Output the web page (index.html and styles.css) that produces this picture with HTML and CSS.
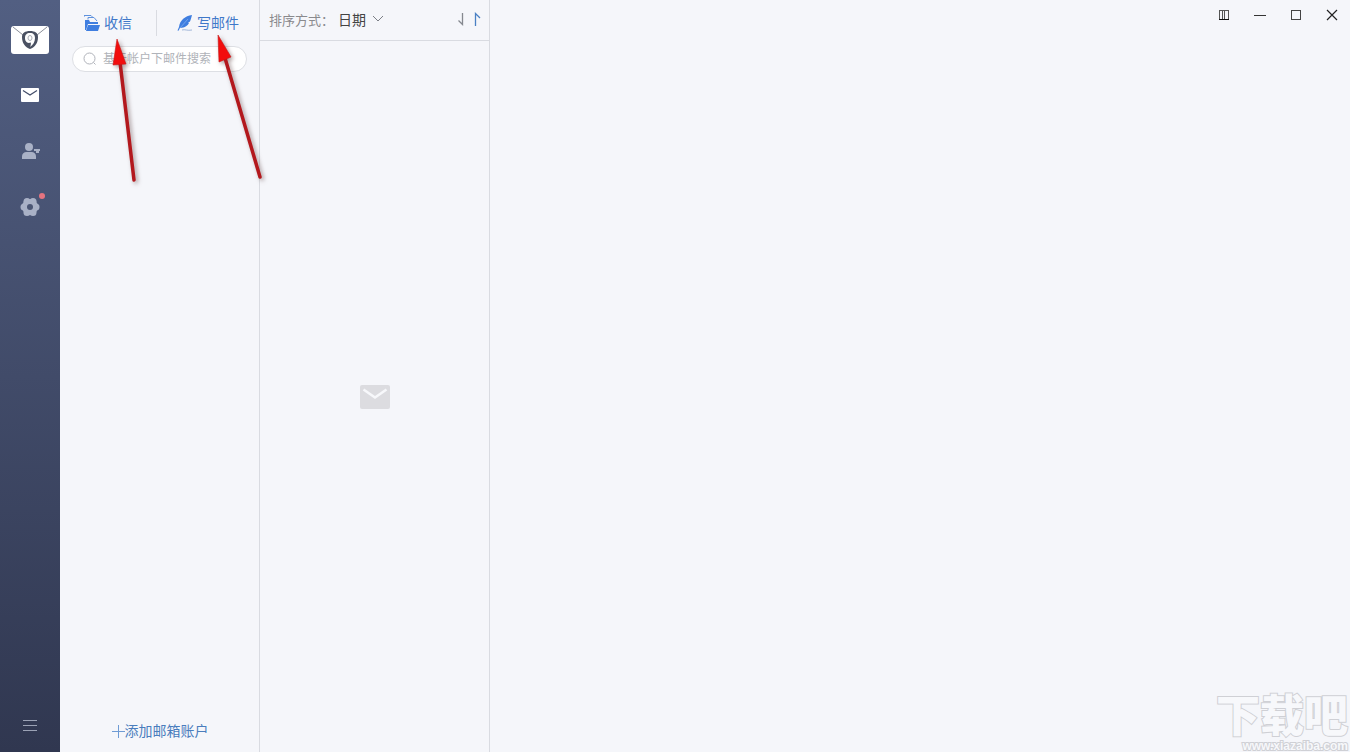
FILE: index.html
```
<!DOCTYPE html>
<html lang="zh-CN">
<head>
    <meta charset="UTF-8">
    <meta name="viewport" content="width=device-width, initial-scale=1.0">
    <title>邮箱</title>
    <link rel="stylesheet" href="styles.css">
</head>
<body>
    <nav class="rail">
        <a class="logo" href="#" aria-label="首页">
            <svg width="38" height="30" viewBox="0 0 38 30">
                <rect x="0" y="1" width="38" height="28" rx="3" fill="#fff"/>
                <path d="M2 2L12 10M36 2L26 10" stroke="#8a8e98" fill="none"/>
                <path d="M19 6c5 0 8 2 8 6 0 6-3 10-8 12-5-2-8-6-8-12 0-4 3-6 8-6z" fill="#4a5162"/>
                <path d="M19 8c3.500 0 5 2 5 5 0 4-2 7-5 9 .8-1.500 1-3 .8-4.500C16 19 14 16 14 13c0-3 1.500-5 5-5z" fill="#fff"/>
                <ellipse cx="19" cy="13" rx="2" ry="2.500" fill="#fff" stroke="#aaaeb7"/>
            </svg>
        </a>
        <a class="rail-link" href="#" aria-label="邮件">
            <svg width="20" height="20" viewBox="0 0 20 20">
                <rect x="1" y="3" width="18" height="14" rx="1" fill="#fff"/>
                <path d="M3 5.500l7 4.500 7-4.500" stroke="#454f6b" stroke-width="1.300" fill="none"/>
            </svg>
        </a>
        <a class="rail-link" href="#" aria-label="联系人">
            <svg width="20" height="20" viewBox="0 0 20 20" fill="#a9b1c6">
                <circle cx="9" cy="6" r="4"/>
                <path d="M2 18v-2.500c0-3 2-4.500 4.500-4.500h5c2.500 0 4.500 1.500 4.500 4.500V18z"/>
                <path d="M14 8h6v2h-1v2h-3v-2h-2z"/>
            </svg>
        </a>
        <a class="rail-link" href="#" aria-label="设置">
            <svg width="20" height="20" viewBox="0 0 20 20">
                <g fill="#a9b1c6">
                    <circle cx="10" cy="10" r="8"/>
                    <circle cx="4" cy="10" r="3.500"/><circle cx="16" cy="10" r="3.500"/>
                    <circle cx="7" cy="4.500" r="3.500"/><circle cx="13" cy="4.500" r="3.500"/>
                    <circle cx="7" cy="15.500" r="3.500"/><circle cx="13" cy="15.500" r="3.500"/>
                </g>
                <circle cx="10" cy="10" r="3" fill="#4b5674"/>
            </svg>
            <span class="dot"></span>
        </a>
        <button class="rail-menu" type="button" aria-label="菜单">
            <svg width="16" height="12" viewBox="0 0 16 12">
                <path d="M1 .5h14M1 5.500h14M1 10.500h14" stroke="#9ba2b5"/>
            </svg>
        </button>
    </nav>

    <aside class="accounts">
        <div class="actions">
            <button class="action" type="button">
                <svg width="16" height="18" viewBox="0 0 16 18">
                    <path d="M1 16V6h4l1 2h8v2H4L2 16z" fill="#3f7ee0"/>
                    <path d="M4 11h12l-2 6H2z" fill="#3f7ee0"/>
                    <path d="M0 3V1.500h7l2 2M4 5.500v-2h6L13 7" stroke="#5f92de" fill="none"/>
                </svg>
                收信
            </button>
            <button class="action" type="button">
                <svg width="16" height="18" viewBox="0 0 16 18">
                    <path d="M15 1C8 2 3 6 2 13l-1.500 3.500 1 .3L3 14c5 0 8-3 9-5l-1-.3 2-1.200C14 5 14.500 3 15 1z" fill="#3f7ee0"/>
                    <path d="M2.500 14.500L11 5" stroke="#a9c6f2" stroke-width=".5"/>
                    <path d="M5 16c3-1 5 1 10 0" stroke="#a3b8da" fill="none"/>
                </svg>
                写邮件
            </button>
        </div>
        <label class="search">
            <svg width="14" height="14" viewBox="0 0 14 14">
                <circle cx="6.500" cy="6.500" r="5.500" fill="none" stroke="#b0b3ba"/>
                <path d="M10.500 10.500l2 2" stroke="#b0b3ba"/>
            </svg>
            <input type="text" placeholder="基于帐户下邮件搜索" aria-label="搜索">
        </label>
        <button class="add-account" type="button">
            <svg width="14" height="14" viewBox="0 0 14 14">
                <path d="M7.500 1v13M1 7.500h13" stroke="#6f9bd4"/>
            </svg>
            添加邮箱账户
        </button>
    </aside>

    <section class="list">
        <div class="sort-bar">
            <span class="sort-label">排序方式：</span>
            <button class="sort-by" type="button">
                日期
                <svg width="12" height="8" viewBox="0 0 12 8">
                    <path d="M1 1l5 5 5-5" stroke="#7c7f86" fill="none"/>
                </svg>
            </button>
            <div class="sort-order">
                <button type="button" aria-label="降序">
                    <svg width="8" height="14" viewBox="0 0 8 14"><path d="M5.500 1v11.500L1.500 8.500" stroke="#85888f" stroke-width="1.300" fill="none"/></svg>
                </button>
                <button type="button" aria-label="升序">
                    <svg width="8" height="14" viewBox="0 0 8 14"><path d="M2.500 14V1.500L7 6" stroke="#4a80c4" stroke-width="1.300" fill="none"/></svg>
                </button>
            </div>
        </div>
        <div class="empty">
            <svg width="30" height="24" viewBox="0 0 30 24">
                <rect width="30" height="24" rx="2" fill="#dcdce0"/>
                <path d="M3.500 4.500L15 12.500l11.500-8" stroke="#f7f8fb" stroke-width="2.500" fill="none"/>
            </svg>
        </div>
    </section>

    <main class="detail">
        <div class="window-controls">
            <button type="button" aria-label="布局">
                <svg width="12" height="12" viewBox="0 0 12 12"><path d="M1.500 1v9M10.500 1v9M4.500 1v9M6.500 1v9M1 1.500h10" stroke="#555" fill="none"/><path d="M1 10.500h10" stroke="#111"/></svg>
            </button>
            <button type="button" aria-label="最小化">
                <svg width="12" height="12" viewBox="0 0 12 12"><path d="M0 6.500h12" stroke="#333"/></svg>
            </button>
            <button type="button" aria-label="最大化">
                <svg width="12" height="12" viewBox="0 0 12 12"><rect x="1.500" y="1.500" width="9" height="9" stroke="#444" fill="none"/></svg>
            </button>
            <button type="button" aria-label="关闭">
                <svg width="12" height="12" viewBox="0 0 12 12"><path d="M1 1l10 10M11 1L1 11" stroke="#222" stroke-width="1.200"/></svg>
            </button>
        </div>
        <div class="watermark">
            <span class="watermark-name">下载吧</span>
            <span class="watermark-url">www.xiazaiba.com</span>
        </div>
    </main>

    <!-- pointers to the two toolbar buttons -->
    <svg class="arrows" width="280" height="200" viewBox="0 0 280 200">
        <g stroke="#b3181d" stroke-width="3.500" stroke-linecap="round">
            <path d="M120 62L134 180"/>
            <path d="M225 58L260 177"/>
        </g>
        <g fill="#f20d0d" stroke="#c81818" stroke-width=".6">
            <path d="M117 39L126 64 113 65z"/>
            <path d="M218 35L231 57 219 62z"/>
        </g>
    </svg>
</body>
</html>
```

FILE: styles.css
```
* { box-sizing: border-box; }
body { margin: 0; min-height: 100vh; display: flex; background: #f5f6fa; font-family: "Liberation Sans", "Noto Sans CJK SC", sans-serif; font-size: 14px; color: #444; }
button { border: none; background: none; padding: 0; font: inherit; color: inherit; cursor: pointer; }
svg { display: block; flex: none; }

.rail { width: 60px; flex: none; display: flex; flex-direction: column; align-items: center; padding: 25px 0 20px; background: linear-gradient(#525f82, #303750); }
.logo { margin-bottom: 30px; }
.rail-link { position: relative; margin-bottom: 36px; }
.dot { position: absolute; top: -4px; right: -5px; width: 6px; height: 6px; border-radius: 50%; background: #e57480; }
.rail-menu { margin-top: auto; }

.accounts { width: 200px; flex: none; display: flex; flex-direction: column; padding: 10px 12px; border-right: 1px solid #d9dbe1; }
.actions { display: flex; height: 26px; }
.action { display: flex; align-items: center; gap: 4px; line-height: 20px; color: #3f78c9; padding: 0 12px; }
.action + .action { border-left: 1px solid #d9dbe1; margin-left: 12px; padding: 0 0 0 20px; }
.search { display: flex; align-items: center; gap: 6px; height: 26px; margin-top: 10px; padding: 0 10px; border: 1px solid #dddfe4; border-radius: 13px; background: #fff; }
.search input { flex: 1; min-width: 0; border: none; outline: none; padding: 0; background: none; font: inherit; font-size: 12px; }
.search input::placeholder { color: #b0b3b9; }
.add-account { display: flex; align-items: center; justify-content: center; margin-top: auto; line-height: 22px; color: #4a7dbd; }

.list { width: 230px; flex: none; display: flex; flex-direction: column; border-right: 1px solid #d9dbe1; }
.sort-bar { display: flex; align-items: center; height: 41px; padding: 0 8px 2px 9px; border-bottom: 1px solid #d9dbe1; }
.sort-label { font-size: 13px; color: #8a8a8d; margin-right: 4px; }
.sort-by { display: flex; align-items: center; gap: 6px; }
.sort-order { display: flex; gap: 8px; margin-left: auto; }
.empty { flex: 1; display: flex; align-items: center; justify-content: center; }

.detail { flex: 1; display: flex; flex-direction: column; justify-content: space-between; }
.window-controls { display: flex; justify-content: flex-end; gap: 24px; padding: 9px 12px; }
.watermark { display: flex; flex-direction: column; align-items: flex-end; padding-right: 2px; color: #f7f8fb; -webkit-text-stroke: 2px #cfd0d5; paint-order: stroke fill; }
.watermark-name { font-size: 44px; line-height: 46px; font-weight: 900; }
.watermark-url { font-size: 12px; line-height: 12px; font-weight: bold; }

.arrows { position: absolute; top: 0; left: 0; pointer-events: none; filter: drop-shadow(2px 2px 2px rgba(90,60,60,0.5)); }
```
